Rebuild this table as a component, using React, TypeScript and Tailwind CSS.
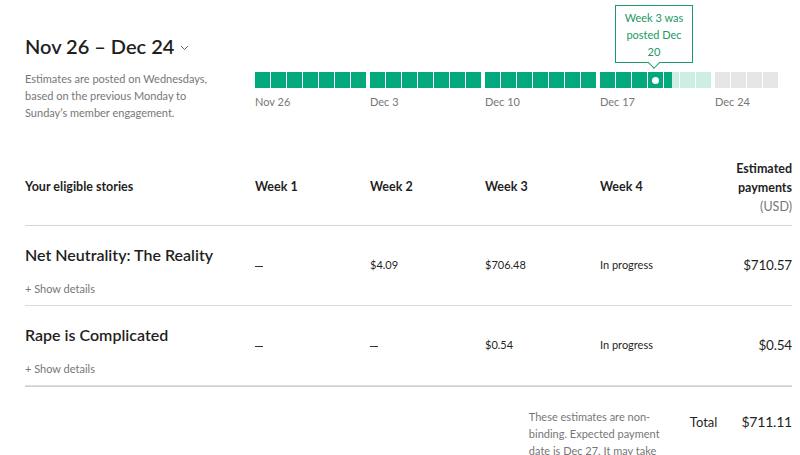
import React from "react";

const weeks: { label: string; cells: ("dark" | "dot" | "half" | "light" | "grey")[] }[] = [
  { label: "Nov 26", cells: ["dark", "dark", "dark", "dark", "dark", "dark", "dark"] },
  { label: "Dec 3", cells: ["dark", "dark", "dark", "dark", "dark", "dark", "dark"] },
  { label: "Dec 10", cells: ["dark", "dark", "dark", "dark", "dark", "dark", "dark"] },
  { label: "Dec 17", cells: ["dark", "dark", "dark", "dot", "half", "light", "light"] },
  { label: "Dec 24", cells: ["grey", "grey", "grey", "grey"] },
];

const stories = [
  { title: "Net Neutrality: The Reality", w1: "—", w2: "$4.09", w3: "$706.48", w4: "In progress", total: "$710.57" },
  { title: "Rape is Complicated", w1: "—", w2: "—", w3: "$0.54", w4: "In progress", total: "$0.54" },
];

function Cell({ kind }: { kind: string }) {
  if (kind === "dot")
    return (
      <div className="w-[15px] h-[16px] bg-[#03a87c] flex items-center justify-center">
        <div className="w-[7px] h-[7px] rounded-full bg-white" />
      </div>
    );
  if (kind === "half")
    return (
      <div className="w-[15px] h-[16px] flex">
        <div className="w-[8px] h-full bg-[#03a87c]" />
        <div className="flex-1 h-full bg-[#cdeee3]" />
      </div>
    );
  const bg =
    kind === "dark" ? "bg-[#03a87c]" : kind === "light" ? "bg-[#cdeee3]" : "bg-[#e6e6e6]";
  return <div className={`w-[15px] h-[16px] ${bg}`} />;
}

function Value({ v }: { v: string }) {
  if (v === "—")
    return <span className="inline-block w-[8px] h-[1.5px] bg-[#333] align-middle" />;
  return <span>{v}</span>;
}

export default function App() {
  return (
    <div
      className="w-[800px] h-[455px] overflow-hidden bg-white text-[#1f1f1f] pl-[25px] pr-[8px]"
      style={{ fontFamily: "Lato, 'Noto Sans', sans-serif" }}
    >
      {/* top: title + progress bar */}
      <div className="flex">
        <div className="w-[230px] shrink-0 pt-[32px]">
          <div className="flex items-center h-[28px]">
            <h1 className="text-[20px] leading-[28px] font-semibold">Nov 26 – Dec 24</h1>
            <svg className="ml-[6px] mt-[3px]" width="9" height="6" viewBox="0 0 9 6">
              <path d="M1 1l3.5 3.5L8 1" fill="none" stroke="#666" strokeWidth="1" />
            </svg>
          </div>
          <p className="mt-[10px] text-[11px] leading-[17px] text-[#777] w-[195px]">
            Estimates are posted on Wednesdays, based on the previous Monday to Sunday’s member engagement.
          </p>
        </div>
        <div className="relative pt-[72px]">
          <div className="absolute left-[360px] top-[5px] w-[78px] h-[58px] border border-[#1c9963] bg-white flex items-center justify-center text-center text-[11px] leading-[17px] text-[#1c9963]">
            Week 3 was
            <br />
            posted Dec
            <br />
            20
            <div className="absolute left-1/2 -bottom-[5px] -translate-x-1/2 w-[9px] h-[9px] rotate-45 bg-white border-r border-b border-[#1c9963]" />
          </div>
          <div className="flex gap-[4px]">
            {weeks.map((w) => (
              <div key={w.label} className="w-[111px]">
                <div className="flex gap-[1px]">
                  {w.cells.map((c, i) => (
                    <Cell key={i} kind={c} />
                  ))}
                </div>
                <div className="mt-[6px] text-[11px] leading-[16px] text-[#777]">{w.label}</div>
              </div>
            ))}
          </div>
        </div>
      </div>

      {/* table */}
      <div className="mt-[38px] w-[767px]">
        <div className="grid grid-cols-[230px_115px_115px_115px_115px_1fr] items-center pb-[9px] border-b border-[#d6d6d6] text-[12.5px] font-bold">
          <div>Your eligible stories</div>
          <div>Week 1</div>
          <div>Week 2</div>
          <div>Week 3</div>
          <div>Week 4</div>
          <div className="text-right leading-[19px]">
            Estimated
            <br />
            payments
            <br />
            <span className="font-normal text-[#777]">(USD)</span>
          </div>
        </div>
        {stories.map((s) => (
          <div
            key={s.title}
            className="grid grid-cols-[230px_115px_115px_115px_115px_1fr] items-center h-[80px] border-b border-[#dcdcdc] text-[11px]"
          >
            <div className="self-start pt-[18px]">
              <div className="text-[16px] leading-[22px] font-semibold">{s.title}</div>
              <div className="mt-[15px] text-[11px] leading-[16px] text-[#777]">+ Show details</div>
            </div>
            <div><Value v={s.w1} /></div>
            <div><Value v={s.w2} /></div>
            <div><Value v={s.w3} /></div>
            <div><Value v={s.w4} /></div>
            <div className="text-right text-[13.5px] tracking-[-0.2px]">{s.total}</div>
          </div>
        ))}
        <div className="h-px bg-[#d0d0d0]" />

        {/* footer */}
        <div className="flex justify-end items-start pt-[25px]">
          <p className="-mt-[4px] w-[140px] text-[11px] leading-[17px] text-[#777]">
            These estimates are non-binding. Expected payment date is Dec 27. It may take
          </p>
          <div className="ml-[21px] text-[13px] leading-[20px]">Total</div>
          <div className="ml-[24px] text-[14px] leading-[20px] tracking-[-0.2px]">$711.11</div>
        </div>
      </div>
    </div>
  );
}
